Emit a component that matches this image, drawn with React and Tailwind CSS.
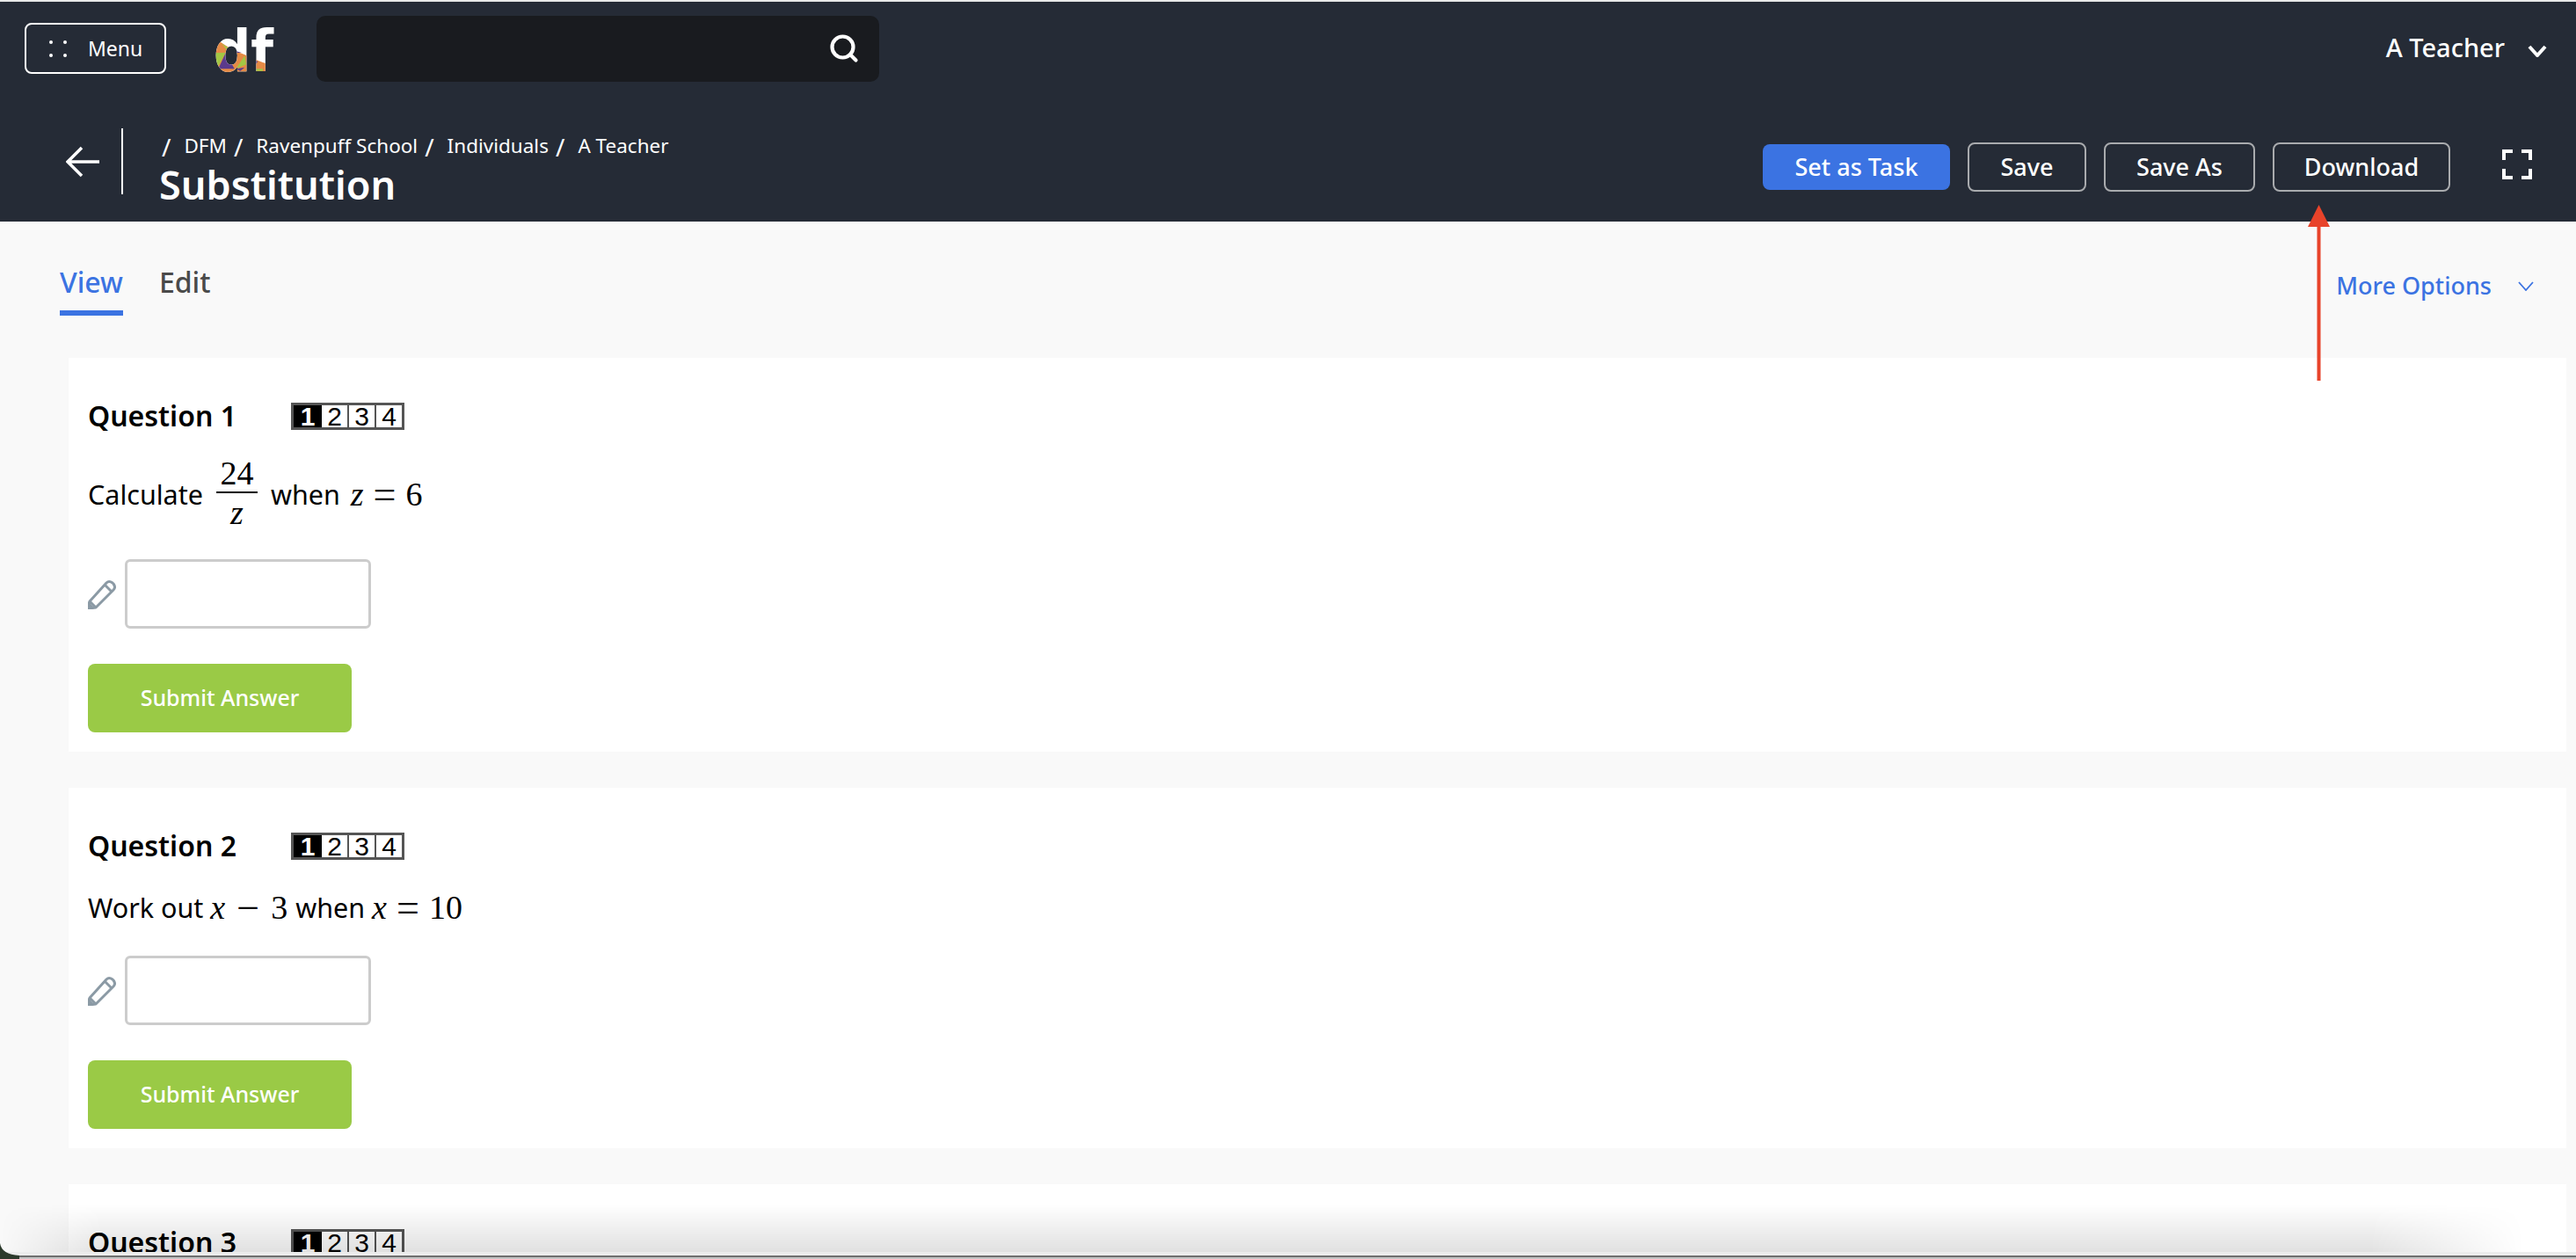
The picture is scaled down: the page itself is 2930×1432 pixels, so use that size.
import { Search } from 'lucide-react'

const crumbs = ['DFM', 'Ravenpuff School', 'Individuals']

function Logo() {
  const letters = { x: 2, y: 63, fontFamily: "'DejaVu Sans', sans-serif", fontWeight: 700, fontSize: 66, textLength: 68, lengthAdjust: 'spacingAndGlyphs' }
  return (
    <svg width="90" height="74" viewBox="0 0 90 74" className="shrink-0">
      <defs>
        <clipPath id="df-clip">
          <text {...letters}>df</text>
        </clipPath>
      </defs>
      <text {...letters} fill="#fff">df</text>
      <g clipPath="url(#df-clip)">
        <g transform="translate(0 7)">
          <polygon points="0,20 10,23 24,32 37,37 45,41 58,46 70,50 70,60 0,60" fill="#e58a45" />
          <polygon points="2,35 9,23 16,28 14,35" fill="#e58a45" />
          <polygon points="1.7,35 15.7,35 7.3,50 1.7,45" fill="#a3c644" />
          <polygon points="10.7,24.3 22.3,31.7 17.3,31.7" fill="#a3c644" />
          <polygon points="15.7,35 7.3,53.3 25.7,53.3" fill="#5b3a8c" />
          <polygon points="22.3,31.7 34,35 24,35" fill="#5b3a8c" />
          <polygon points="37.3,38.3 39,48.3 27.3,53.3 30.7,48.3" fill="#a3c644" />
          <polygon points="27.3,53.3 37.3,51.7 32.3,55.7" fill="#5b3a8c" />
          <polygon points="45,41.7 52.3,45 45.7,53.3" fill="#5b3a8c" />
          <polygon points="47.3,53.3 58,53.3 58,55.7 45.7,55.7" fill="#a3c644" />
        </g>
      </g>
    </svg>
  )
}

function OutlineButton({ children, width }) {
  return (
    <button className={`flex h-[56px] items-center justify-center rounded-[8px] border-2 border-[#a9abae] bg-[#252b36] text-[27px] font-medium text-white ${width}`}>
      {children}
    </button>
  )
}

function Pencil() {
  return (
    <svg width="32" height="34" viewBox="0 0 32 34" fill="none" stroke="#8b9aa5" strokeWidth="3" className="shrink-0">
      <path d="M2 25 L21 4 Q24 1 28 4 L29 5 Q32 9 29 12 L9 32 L1 33 Z" strokeLinejoin="round" />
      <path d="M19 6 L27 14" />
      <path d="M2 25 L9 32" />
      <path d="M1 33 L1 28 L5 32 Z" fill="#8b9aa5" />
    </svg>
  )
}

function Levels() {
  return (
    <div className="flex h-[31px] w-[129px] border-[3px] border-[#555] font-['Liberation_Sans',sans-serif] text-[30px] leading-[25px] text-black">
      <span className="flex w-[32px] items-center justify-center bg-black font-bold text-white">1</span>
      <span className="flex w-[31px] items-center justify-center border-r-2 border-[#555]">2</span>
      <span className="flex w-[31px] items-center justify-center border-r-2 border-[#555]">3</span>
      <span className="flex flex-1 items-center justify-center">4</span>
    </div>
  )
}

function Mi({ children }) {
  return <span className="italic">{children}</span>
}

function Question({ number, children }) {
  return (
    <section className="bg-white pb-[22px] pl-[22px] pt-[50px]">
      <div className="flex h-[32px] items-center">
        <h2 className="w-[231px] text-[32px] font-semibold leading-[32px] text-black">Question {number}</h2>
        <Levels />
      </div>
      {children && (
        <>
          <div className="flex items-center py-[28px] text-[30.5px] leading-[53px] text-black">{children}</div>
          <div className="flex items-center gap-[10px]">
            <Pencil />
            <input className="h-[79px] w-[280px] rounded-[6px] border-[3px] border-[#cccccc] bg-white" />
          </div>
          <button className="mt-[40px] flex h-[78px] w-[300px] items-center justify-center rounded-[8px] bg-[#9aca46] text-[25px] font-medium text-white">
            Submit Answer
          </button>
        </>
      )}
    </section>
  )
}

const serif = "font-['Liberation_Serif',serif] text-[38px]"
const eq = 'mx-[11px] text-[46px] leading-none'

export default function App() {
  return (
    <div className="relative h-[1432px] overflow-hidden bg-[#f9f9f9] font-['Noto_Sans',sans-serif]">
      <header className="h-[252px] border-t-2 border-[#e8e9e9] bg-[#252b36] text-white">
        <div className="flex h-[106px] items-center pl-[28px] pr-[33px]">
          <button className="flex h-[58px] w-[161px] items-center rounded-[8px] border-2 border-white pl-[26px] text-[23px]">
            <span className="grid grid-cols-2 gap-x-[12px] gap-y-[11px]">
              <i className="size-[4px] rounded-full bg-white" />
              <i className="size-[4px] rounded-full bg-white" />
              <i className="size-[4px] rounded-full bg-white" />
              <i className="size-[4px] rounded-full bg-white" />
            </span>
            <span className="ml-[24px]">Menu</span>
          </button>
          <div className="ml-[52px]"><Logo /></div>
          <div className="ml-[29px] flex h-[75px] w-[640px] items-center justify-end rounded-[10px] bg-[#191b1f] pr-[22px]">
            <Search size={36} strokeWidth={2.8} />
          </div>
          <div className="ml-auto flex items-center gap-[26px] text-[29px] font-medium">
            <span className="mt-[-2px]">A Teacher</span>
            <svg width="22" height="14" viewBox="0 0 22 14" fill="none" stroke="#fff" strokeWidth="4" className="mt-[6px]"><path d="M2 2 L11 12 L20 2" /></svg>
          </div>
        </div>
        <div className="flex h-[144px] items-start pl-[75px] pr-[50px]">
          <div className="mt-[38px] flex h-[75px] items-center">
            <svg width="38" height="36" viewBox="0 0 38 36" fill="none" stroke="#fff" strokeWidth="3.5" className="shrink-0"><path d="M18 2 L2 18 L18 34 M2 18 H38" /></svg>
            <div className="ml-[25px] h-[75px] w-[2px] bg-white" />
            <div className="ml-[41px] mt-[14px]">
              <div className="flex h-[36px] items-center pl-[3px] text-[22.5px] leading-none">
                <span className="mr-[15px] text-[28px]">/</span>
                {crumbs.map((c) => (
                  <span key={c} className="mr-[15px] flex items-center gap-[8px]">
                    {c}<span className="text-[28px]">/</span>
                  </span>
                ))}
                <span>A Teacher</span>
              </div>
              <h1 className="mt-[2px] text-[45px] font-semibold leading-[46px]">Substitution</h1>
            </div>
          </div>
          <div className="ml-auto mt-[54px] flex items-center gap-[20px]">
            <button className="flex h-[52px] w-[213px] items-center justify-center rounded-[8px] bg-[#3b73e2] text-[27px] font-medium">Set as Task</button>
            <OutlineButton width="w-[135px]">Save</OutlineButton>
            <OutlineButton width="w-[172px]">Save As</OutlineButton>
            <OutlineButton width="w-[202px]">Download</OutlineButton>
            <svg width="34" height="34" viewBox="0 0 34 34" fill="none" stroke="#fff" strokeWidth="4" className="ml-[39px] mt-[-6px] shrink-0"><path d="M2 12 V2 H12 M22 2 H32 V12 M2 22 V32 H12 M32 22 V32 H22" /></svg>
          </div>
        </div>
      </header>

      <div className="flex h-[155px] items-start justify-between pl-[68px] pr-[48px]">
        <div className="flex gap-[41px] pt-[48px] text-[32px] font-medium leading-[41px]">
          <span className="h-[59px] border-b-[6px] border-[#3b73e2] text-[#3b73e2]">View</span>
          <span className="text-[#4a4a4a]">Edit</span>
        </div>
        <div className="flex items-center gap-[30px] pt-[55px] text-[27px] font-medium leading-[36px] text-[#3b73e2]">
          <span>More Options</span>
          <svg width="18" height="11" viewBox="0 0 18 11" fill="none" stroke="#3b73e2" strokeWidth="1.8"><path d="M1 1 L9 10 L17 1" /></svg>
        </div>
      </div>

      <main className="ml-[78px] mr-[11px] flex flex-col gap-[41px]">
        <Question number={1}>
          <span>Calculate</span>
          <span className={`mx-[15px] flex w-[47px] flex-col items-center ${serif}`}>
            <span className="h-[42px] leading-[42px]">24</span>
            <span className="h-[2px] w-full bg-black" />
            <span className="h-[47px] leading-[44px]"><Mi>z</Mi></span>
          </span>
          <span>when</span>
          <span className={`ml-[12px] flex items-center ${serif}`}><Mi>z</Mi><span className={eq}>=</span>6</span>
        </Question>
        <Question number={2}>
          <span>Work out</span>
          <span className={`ml-[8px] mr-[9px] flex items-center ${serif}`}><Mi>x</Mi><span className="mx-[13px] text-[46px] leading-none">−</span>3</span>
          <span>when</span>
          <span className={`ml-[8px] flex items-center ${serif}`}><Mi>x</Mi><span className={eq}>=</span>10</span>
        </Question>
        <Question number={3} />
      </main>

      {/* window edge at the bottom of the capture */}
      <div className="absolute inset-x-0 bottom-[8px] h-[54px] bg-gradient-to-b from-transparent to-black/[.12] [mask-image:linear-gradient(90deg,transparent,black_4%,black_92%,transparent_98%)]" />
      <div className="absolute inset-x-0 bottom-0 h-[8px] bg-[#ececec]">
        <div className="mt-[4px] h-[2px] bg-[#6f6f6f]" />
        <div className="h-[2px] bg-[#c4c4c4]" />
      </div>
      <svg width="22" height="18" viewBox="0 0 22 18" className="absolute bottom-0 left-0">
        <path d="M0 0 Q2 13 22 14 L22 18 L0 18 Z" fill="#2c3a2c" />
      </svg>

      <svg width="26" height="200" viewBox="0 0 26 200" className="absolute left-[2625px] top-[233px]">
        <path d="M12.5 0 L25 25 L14.5 25 L14.5 200 L10.5 200 L10.5 25 L0 25 Z" fill="#e8432a" />
      </svg>
    </div>
  )
}
